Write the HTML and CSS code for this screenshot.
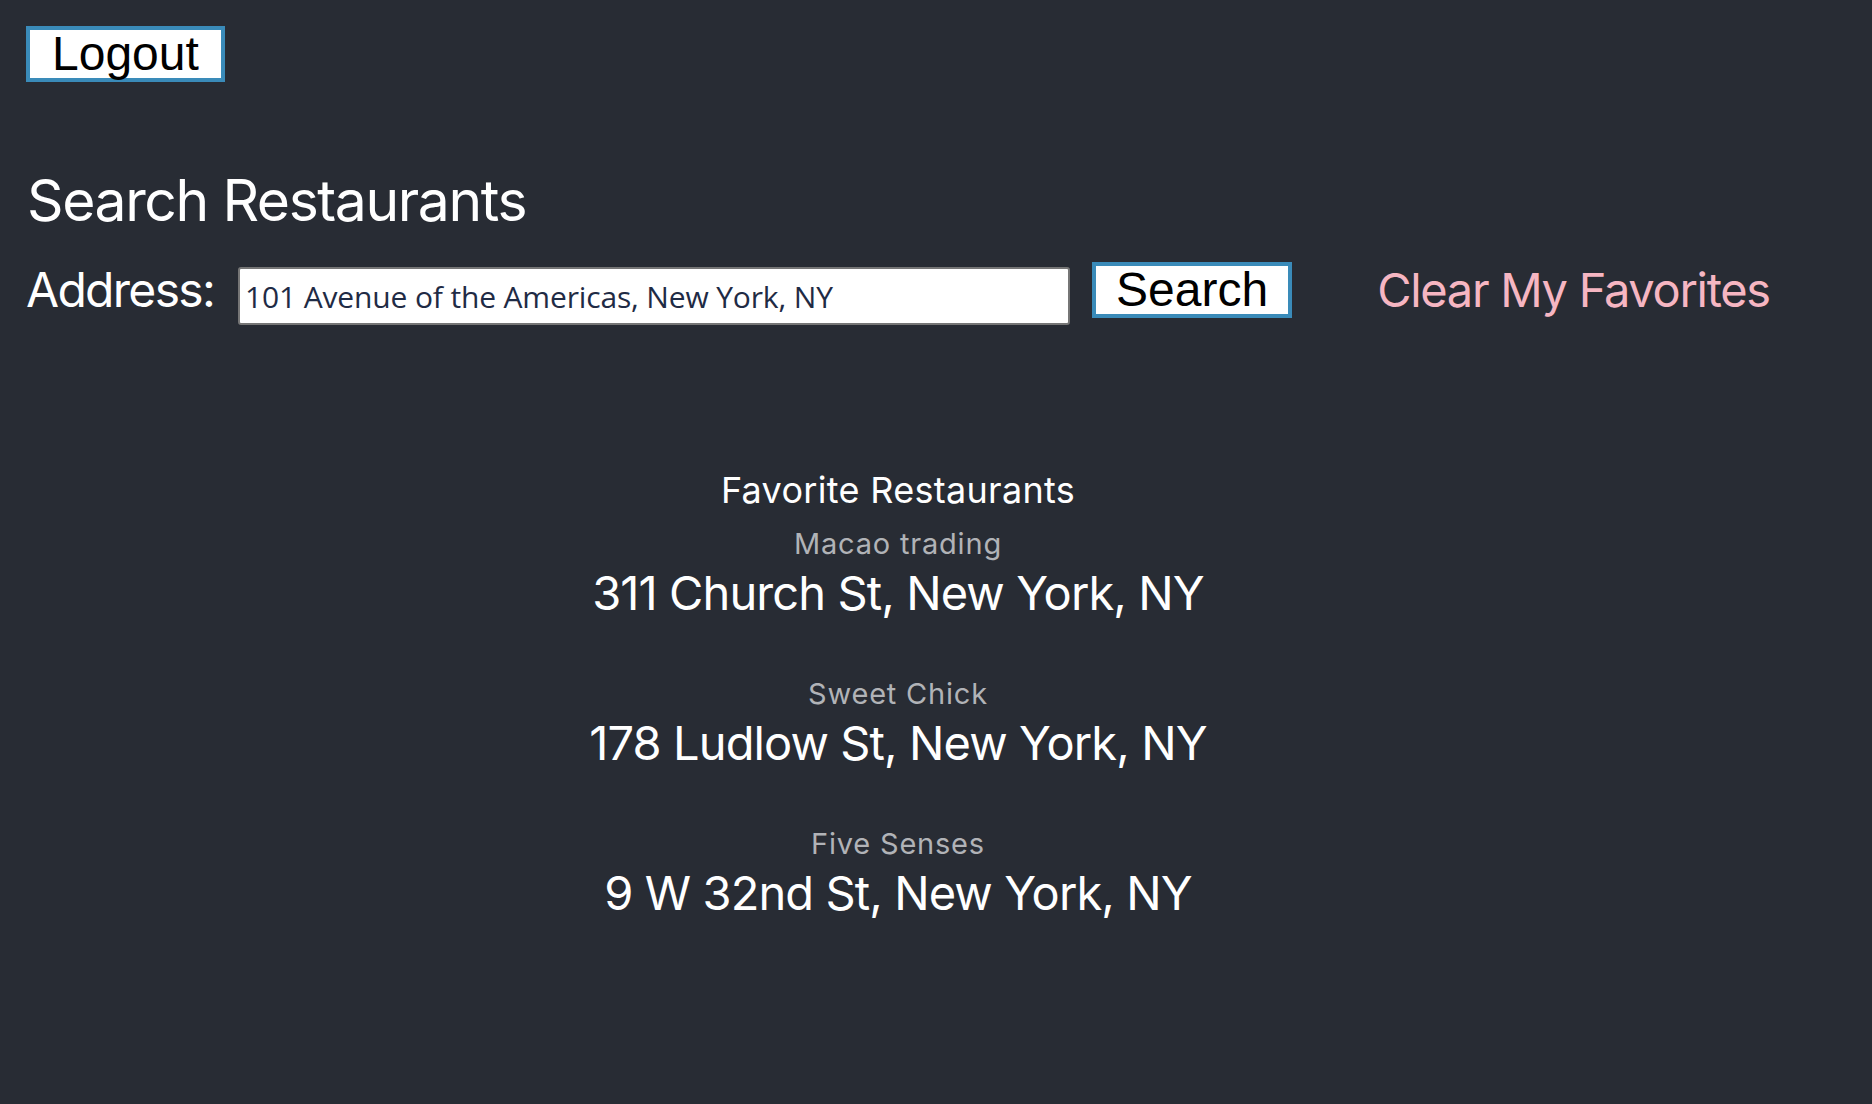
FILE: index.html
```html
<!DOCTYPE html>
<html lang="en">
<head>
<meta charset="utf-8">
<title>Search Restaurants</title>
<link rel="stylesheet" href="styles.css">
</head>
<body>
<div class="page">
  <div class="top">
    <button class="btn">Logout</button>
  </div>
  <h1 class="title">Search Restaurants</h1>
  <form class="search-row">
    <label class="label" for="addr">Address:</label>
    <input id="addr" class="addr-input" type="text" value="101 Avenue of the Americas, New York, NY">
    <button type="button" class="btn btn-search">Search</button>
    <a class="clear-link">Clear My Favorites</a>
  </form>
</div>
<section class="favorites">
  <h2 class="fav-title">Favorite Restaurants</h2>
  <div class="fav-item">
    <div class="fav-name">Macao trading</div>
    <div class="fav-addr">311 Church St, New York, NY</div>
  </div>
  <div class="fav-item">
    <div class="fav-name">Sweet Chick</div>
    <div class="fav-addr">178 Ludlow St, New York, NY</div>
  </div>
  <div class="fav-item">
    <div class="fav-name">Five Senses</div>
    <div class="fav-addr">9 W 32nd St, New York, NY</div>
  </div>
</section>
</body>
</html>
```

FILE: styles.css
```css
html, body {
  margin: 0;
  padding: 0;
  background: #282c34;
  min-height: 100%;
}
body {
  font-family: Inter, "Noto Sans", sans-serif;
  color: #ffffff;
  height: 1104px;
}
.page {
  padding: 26px 0 0 26px;
}
.top {
  display: flex;
}
.btn {
  font-family: "Liberation Sans", Arial, sans-serif;
  font-size: 48px;
  line-height: 48px;
  color: #000;
  background: #fff;
  border: 4px solid #3a8bb9;
  padding: 0 22px;
  height: 56px;
  margin: 0;
  cursor: pointer;
}
.title {
  font-size: 57px;
  font-weight: 400;
  line-height: 72px;
  margin: 83px 0 0 1px;
  letter-spacing: -1.4px;
}
.search-row {
  display: flex;
  align-items: flex-start;
  margin-top: 22px;
}
.label {
  font-size: 48px;
  line-height: 58px;
  letter-spacing: -1.7px;
  margin: 2px 24px 0 0;
}
.addr-input {
  box-sizing: border-box;
  width: 832px;
  height: 58px;
  border: 2px solid #767676;
  border-radius: 3px;
  padding: 0 8px 0 5px;
  font-family: "Open Sans", sans-serif;
  font-size: 30px;
  letter-spacing: -0.15px;
  color: #1f2b45;
  background: #fff;
  margin: 8px 0 0 0;
}
.btn-search {
  margin: 3px 0 0 22px;
  padding: 0 20px;
}
.clear-link {
  font-size: 47px;
  line-height: 57px;
  color: #f6b6c2;
  margin: 2px 0 0 85px;
  letter-spacing: -1.3px;
}
.favorites {
  width: 1796px;
  text-align: center;
  margin-top: 143px;
}
.fav-title {
  font-size: 36px;
  font-weight: 400;
  line-height: 44px;
  margin: 0 0 12px 0;
  letter-spacing: 0.3px;
}
.fav-item {
  margin-bottom: 52px;
}
.fav-name {
  font-size: 29px;
  line-height: 40px;
  color: #b1b3b7;
  letter-spacing: 0.8px;
}
.fav-addr {
  font-size: 47px;
  line-height: 58px;
  letter-spacing: -0.9px;
}
```
